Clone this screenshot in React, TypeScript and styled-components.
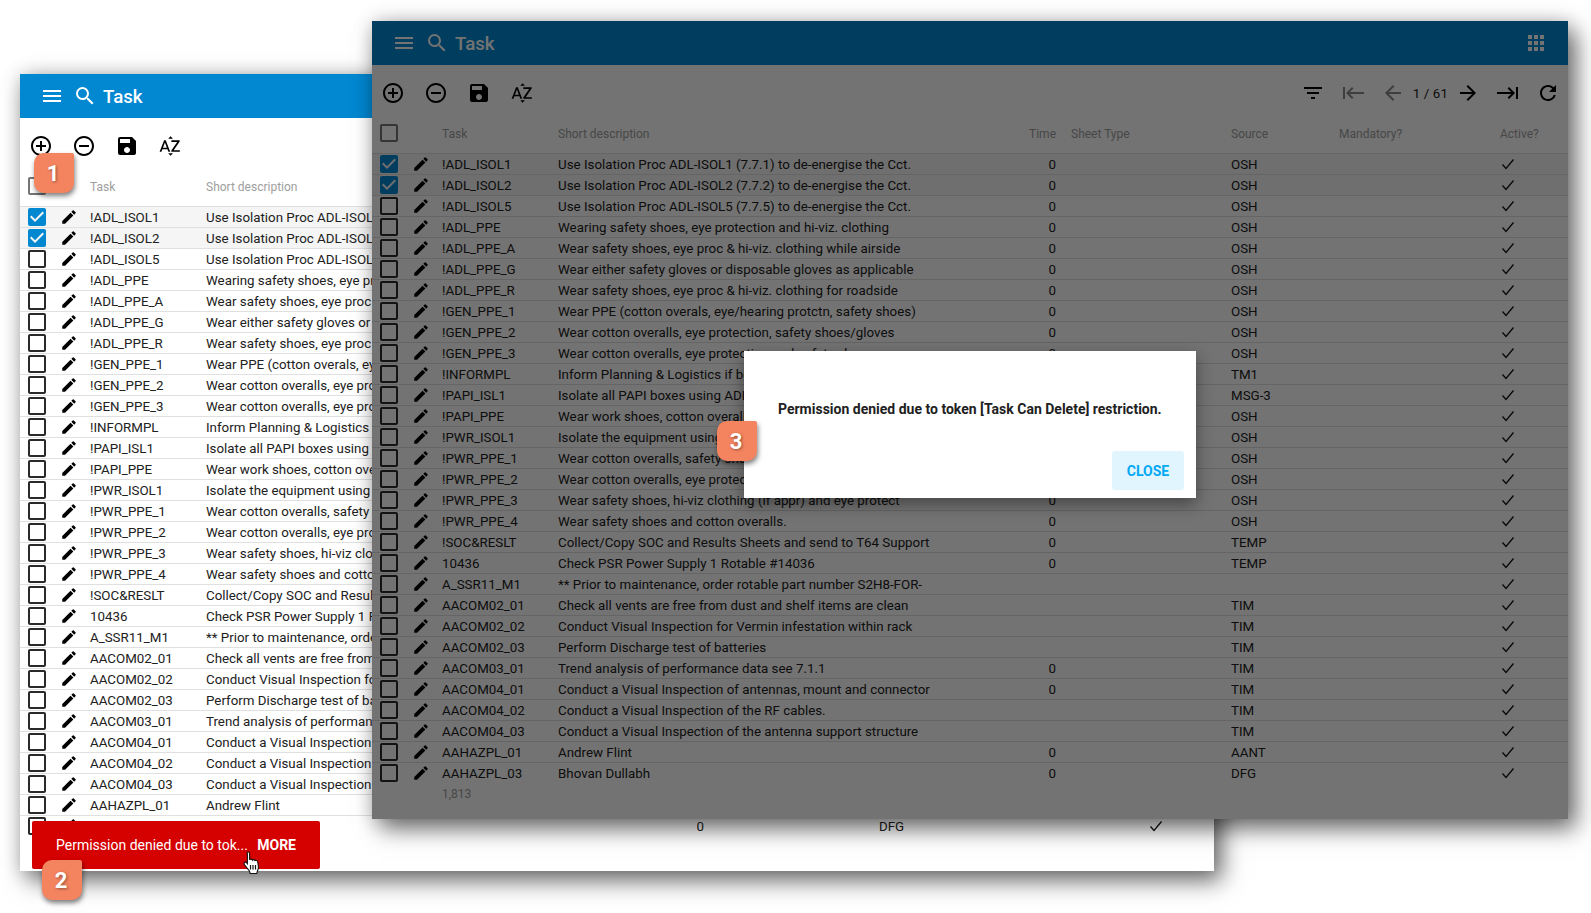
import React from 'react';
import styled, { createGlobalStyle } from 'styled-components';
import {
  MdAddCircleOutline,
  MdApps,
  MdArrowBack,
  MdArrowForward,
  MdCheckBox,
  MdCheckBoxOutlineBlank,
  MdEdit,
  MdFilterList,
  MdKeyboardTab,
  MdMenu,
  MdRefresh,
  MdRemoveCircleOutline,
  MdSave,
  MdSearch,
  MdSortByAlpha,
} from 'react-icons/md';

const GlobalStyle = createGlobalStyle`
  html, body {
    margin: 0;
    padding: 0;
    background: #fff;
    overflow: hidden;
  }
  body {
    font-family: Roboto, "Liberation Sans", sans-serif;
  }
`;

const Desktop = styled.div`
  position: relative;
  width: 1591px;
  height: 913px;
  overflow: hidden;
  background: #fff;
`;

const Win = styled.section<{ $x: number; $y: number; $w: number; $h: number }>`
  position: absolute;
  left: ${p => p.$x}px;
  top: ${p => p.$y}px;
  width: ${p => p.$w}px;
  height: ${p => p.$h}px;
  background: #fff;
  box-shadow: 8px 10px 22px rgba(0, 0, 0, 0.55), 0 0 18px rgba(0, 0, 0, 0.18);
`;

const AppBar = styled.header`
  height: 44px;
  background: #0288d1;
  color: #fff;
  display: flex;
  align-items: center;
  padding: 0 16px;
  font-size: 24px;
`;

const BarIcon = styled.span`
  width: 32px;
  display: flex;
  justify-content: center;
  color: #fff;
  & + & {
    margin-left: 1px;
  }
`;

const Title = styled.h1`
  margin: 2px 0 0 2px;
  font-size: 18.7px;
  font-weight: 500;
  flex: 1;
`;

const Toolbar = styled.div`
  height: 56px;
  display: flex;
  align-items: center;
  margin-left: -1px;
`;

const Tool = styled.button<{ $off?: boolean }>`
  all: unset;
  width: 43px;
  height: 24px;
  display: flex;
  justify-content: center;
  color: ${p => (p.$off ? '#8a8a8a' : '#000')};
  font-size: 24px;
`;

const PageTool = styled(Tool)`
  width: 40px;
`;

const Flip = styled.span`
  display: flex;
  transform: scaleX(-1);
`;

const Spacer = styled.div`
  flex: 1;
`;

const PageCount = styled.span`
  font-size: 13.33px;
  color: #212121;
  letter-spacing: 0.1px;
  white-space: nowrap;
`;

const columns = '36px 34px 116px 448px 50px 175px 108px 161px 68px';

const HeadRow = styled.div`
  display: grid;
  grid-template-columns: ${columns};
  height: 24px;
  margin-bottom: 8px;
  align-items: center;
  font-size: 12px;
  color: #9e9e9e;
`;

const Row = styled.div<{ $selected?: boolean }>`
  display: grid;
  grid-template-columns: ${columns};
  height: 21px;
  box-sizing: border-box;
  align-items: center;
  font-size: 13.33px;
  color: #212121;
  border-top: 1px solid #e0e0e0;
  background: ${p => (p.$selected ? '#f5f5f5' : 'transparent')};
  &:last-of-type {
    border-bottom: 1px solid #e0e0e0;
    height: 22px;
  }
`;

const Cell = styled.div<{ $right?: boolean; $pad?: boolean }>`
  white-space: nowrap;
  overflow: hidden;
  padding-top: 1px;
  text-align: ${p => (p.$right ? 'right' : 'left')};
  padding-left: ${p => (p.$pad ? '15px' : '0')};
`;

const IconCell = styled.div`
  display: flex;
  align-items: center;
  justify-content: center;
  height: 20px;
`;

const Box = styled(IconCell)<{ $on?: boolean; $head?: boolean }>`
  justify-content: flex-end;
  font-size: 24px;
  margin-right: 7px;
  color: ${p => (p.$on ? '#0288d1' : p.$head ? '#757575' : '#2a2a2a')};
`;

const Pencil = styled(IconCell)`
  font-size: 18px;
  color: #000;
  padding-right: 9px;
`;

const ActiveMark = styled.svg`
  display: block;
`;

const Footer = styled.div`
  padding: 4px 0 0 70px;
  font-size: 12px;
  color: #9e9e9e;
`;

const Scrim = styled.div`
  position: absolute;
  inset: 0;
  background: rgba(0, 0, 0, 0.55);
`;

const Dialog = styled.div`
  position: absolute;
  left: 372px;
  top: 330px;
  width: 452px;
  height: 147px;
  background: #fff;
  box-shadow: 0 6px 16px rgba(0, 0, 0, 0.4);
  display: flex;
  flex-direction: column;
`;

const DialogText = styled.p`
  margin: 0;
  padding: 50px 0 0 34px;
  font-size: 14px;
  font-weight: 700;
  color: #212121;
  flex: 1;
  white-space: nowrap;
`;

const DialogActions = styled.div`
  display: flex;
  justify-content: flex-end;
  padding: 0 12px 8px 0;
`;

const CloseButton = styled.button`
  all: unset;
  width: 72px;
  height: 39px;
  display: flex;
  align-items: center;
  justify-content: center;
  background: #e1f5fe;
  color: #03a9f4;
  border-radius: 3px;
  font-size: 14px;
  font-weight: 700;
`;

const Snackbar = styled.div`
  position: absolute;
  left: 32px;
  top: 821px;
  width: 288px;
  height: 48px;
  box-sizing: border-box;
  padding: 0 24px;
  background: #d50000;
  border-radius: 2px;
  color: #fff;
  display: flex;
  align-items: center;
  justify-content: space-between;
  font-size: 14px;
`;

const SnackAction = styled.span`
  font-weight: 700;
`;

const HandCursor = styled.svg`
  position: absolute;
  left: 211px;
  top: 30px;
`;

const Badge = styled.div<{ $x: number; $y: number }>`
  position: absolute;
  left: ${p => p.$x}px;
  top: ${p => p.$y}px;
  width: 40px;
  height: 40px;
  box-sizing: border-box;
  padding-right: 2px;
  background: #f4845f;
  border-radius: 10px 2px 10px 10px;
  box-shadow: 1px 3px 5px rgba(0, 0, 0, 0.5);
  color: #fff;
  font-size: 22px;
  font-weight: 700;
  display: flex;
  align-items: center;
  justify-content: center;
  text-shadow: 1px 1px 3px rgba(0, 0, 0, 0.4);
`;

type Task = [string, string, string, string];

const tasks: Task[] = [
  ['!ADL_ISOL1', 'Use Isolation Proc ADL-ISOL1 (7.7.1) to de-energise the Cct.', '0', 'OSH'],
  ['!ADL_ISOL2', 'Use Isolation Proc ADL-ISOL2 (7.7.2) to de-energise the Cct.', '0', 'OSH'],
  ['!ADL_ISOL5', 'Use Isolation Proc ADL-ISOL5 (7.7.5) to de-energise the Cct.', '0', 'OSH'],
  ['!ADL_PPE', 'Wearing safety shoes, eye protection and hi-viz. clothing', '0', 'OSH'],
  ['!ADL_PPE_A', 'Wear safety shoes, eye proc & hi-viz. clothing while airside', '0', 'OSH'],
  ['!ADL_PPE_G', 'Wear either safety gloves or disposable gloves as applicable', '0', 'OSH'],
  ['!ADL_PPE_R', 'Wear safety shoes, eye proc & hi-viz. clothing for roadside', '0', 'OSH'],
  ['!GEN_PPE_1', 'Wear PPE (cotton overals, eye/hearing protctn, safety shoes)', '0', 'OSH'],
  ['!GEN_PPE_2', 'Wear cotton overalls, eye protection, safety shoes/gloves', '0', 'OSH'],
  ['!GEN_PPE_3', 'Wear cotton overalls, eye protection and safety shoes', '0', 'OSH'],
  ['!INFORMPL', 'Inform Planning & Logistics if before work', '0', 'TM1'],
  ['!PAPI_ISL1', 'Isolate all PAPI boxes using ADL-ISOL', '0', 'MSG-3'],
  ['!PAPI_PPE', 'Wear work shoes, cotton overalls', '0', 'OSH'],
  ['!PWR_ISOL1', 'Isolate the equipment using ADL', '0', 'OSH'],
  ['!PWR_PPE_1', 'Wear cotton overalls, safety shoes', '0', 'OSH'],
  ['!PWR_PPE_2', 'Wear cotton overalls, eye protection', '0', 'OSH'],
  ['!PWR_PPE_3', 'Wear safety shoes, hi-viz clothing (if appr) and eye protect', '0', 'OSH'],
  ['!PWR_PPE_4', 'Wear safety shoes and cotton overalls.', '0', 'OSH'],
  ['!SOC&RESLT', 'Collect/Copy SOC and Results Sheets and send to T64 Support', '0', 'TEMP'],
  ['10436', 'Check PSR Power Supply 1 Rotable #14036', '0', 'TEMP'],
  ['A_SSR11_M1', '** Prior to maintenance, order rotable part number S2H8-FOR-', '', ''],
  ['AACOM02_01', 'Check all vents are free from dust and shelf items are clean', '', 'TIM'],
  ['AACOM02_02', 'Conduct Visual Inspection for Vermin infestation within rack', '', 'TIM'],
  ['AACOM02_03', 'Perform Discharge test of batteries', '', 'TIM'],
  ['AACOM03_01', 'Trend analysis of performance data see 7.1.1', '0', 'TIM'],
  ['AACOM04_01', 'Conduct a Visual Inspection of antennas, mount and connector', '0', 'TIM'],
  ['AACOM04_02', 'Conduct a Visual Inspection of the RF cables.', '', 'TIM'],
  ['AACOM04_03', 'Conduct a Visual Inspection of the antenna support structure', '', 'TIM'],
  ['AAHAZPL_01', 'Andrew Flint', '0', 'AANT'],
  ['AAHAZPL_03', 'Bhovan Dullabh', '0', 'DFG'],
];

const TaskWindow: React.FC<{ full?: boolean }> = ({ full }) => (
  <>
    <AppBar>
      <BarIcon><MdMenu /></BarIcon>
      <BarIcon><MdSearch /></BarIcon>
      <Title>Task</Title>
      {full && <BarIcon><MdApps /></BarIcon>}
    </AppBar>
    <Toolbar>
      <Tool><MdAddCircleOutline /></Tool>
      <Tool><MdRemoveCircleOutline /></Tool>
      <Tool><MdSave /></Tool>
      <Tool><MdSortByAlpha /></Tool>
      <Spacer />
      <PageTool><MdFilterList /></PageTool>
      <PageTool $off><Flip><MdKeyboardTab /></Flip></PageTool>
      <PageTool $off><MdArrowBack /></PageTool>
      <PageCount>1 / 61</PageCount>
      <PageTool><MdArrowForward /></PageTool>
      <PageTool><MdKeyboardTab /></PageTool>
      <PageTool><MdRefresh /></PageTool>
    </Toolbar>
    <HeadRow>
      <Box $head><MdCheckBoxOutlineBlank /></Box>
      <span />
      <Cell>Task</Cell>
      <Cell>Short description</Cell>
      <Cell $right>Time</Cell>
      <Cell $pad>Sheet Type</Cell>
      <Cell>Source</Cell>
      <Cell>Mandatory?</Cell>
      <Cell>Active?</Cell>
    </HeadRow>
    {tasks.map(([code, text, time, source], i) => (
      <Row key={code} $selected={i < 2}>
        <Box $on={i < 2}>{i < 2 ? <MdCheckBox /> : <MdCheckBoxOutlineBlank />}</Box>
        <Pencil><MdEdit /></Pencil>
        <Cell>{code}</Cell>
        <Cell>{text}</Cell>
        <Cell $right>{time}</Cell>
        <span />
        <Cell>{source}</Cell>
        <span />
        <ActiveMark width="16" height="14" viewBox="0 0 16 14">
          <path d="M2.5 7.5 L6 11.5 L13.5 2.5" fill="none" stroke="#111" strokeWidth="1.3" />
        </ActiveMark>
      </Row>
    ))}
    <Footer>1,813</Footer>
  </>
);

export default function App() {
  return (
    <Desktop>
      <GlobalStyle />
      <Win $x={20} $y={74} $w={1194} $h={797}>
        <TaskWindow />
      </Win>
      <Snackbar>
        <span>Permission denied due to tok...</span>
        <SnackAction>MORE</SnackAction>
        <HandCursor width="17" height="24" viewBox="0 0 17 24">
          <path
            d="M5 1c1 0 1.6.7 1.6 1.6v6.2c.3-.9 2.5-.9 2.8.3.5-.8 2.3-.7 2.6.5.7-.5 2.5-.3 2.7 1.2l.7 4.7c.2 1.6-.2 3-.9 4.3l-.7 2.7H7.2l-.8-2.5-4.9-6.2c-.7-1-.5-2 .2-2.4.8-.5 1.6-.2 2.1.4l.6.8V2.6C3.4 1.7 4 1 5 1z"
            fill="#fff"
            stroke="#111"
            strokeWidth="1.1"
          />
          <path d="M7.5 14v4.5M10 14v4.5M12.5 14v4.5" fill="none" stroke="#111" strokeWidth="1.2" />
        </HandCursor>
      </Snackbar>
      <Badge $x={34} $y={153}>1</Badge>
      <Badge $x={42} $y={860}>2</Badge>
      <Win $x={372} $y={21} $w={1196} $h={798}>
        <TaskWindow full />
        <Scrim />
        <Dialog>
          <DialogText>Permission denied due to token [Task Can Delete] restriction.</DialogText>
          <DialogActions>
            <CloseButton>CLOSE</CloseButton>
          </DialogActions>
        </Dialog>
        <Badge $x={345} $y={400}>3</Badge>
      </Win>
    </Desktop>
  );
}
